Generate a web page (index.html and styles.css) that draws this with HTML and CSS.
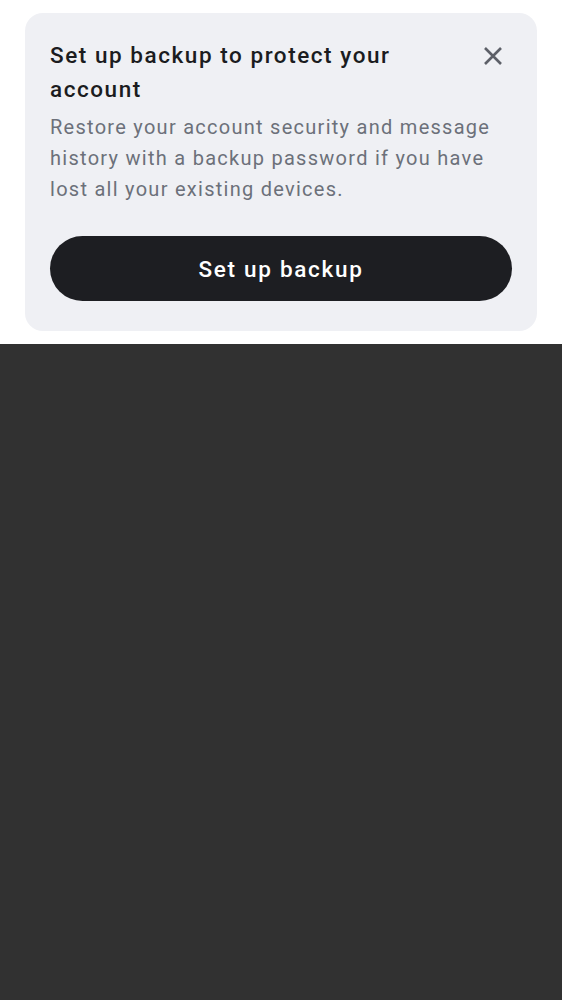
FILE: index.html
```html
<!DOCTYPE html>
<html>
<head>
<meta charset="utf-8">
<link rel="stylesheet" href="styles.css">
</head>
<body>
<div class="top">
  <div class="card">
    <div class="head">
      <h1 class="title">Set up backup to protect your account</h1>
      <button class="close" aria-label="Close">
        <svg width="20" height="20" viewBox="0 0 20 20"><path d="M2 2L18 18M18 2L2 18" stroke="currentColor" stroke-width="2.6" stroke-linecap="butt"/></svg>
      </button>
    </div>
    <p class="body">Restore your account security and message history with a backup password if you have lost all your existing devices.</p>
    <button class="cta">Set up backup</button>
  </div>
</div>
<div class="bottom"></div>
</body>
</html>
```
FILE: styles.css
```css
html, body {
  margin: 0;
  padding: 0;
  height: 100%;
}
body {
  font-family: Roboto, "Liberation Sans", sans-serif;
  background: #313131;
  display: flex;
  flex-direction: column;
}
.top {
  background: #ffffff;
  padding: 13px 25px 13px 25px;
}
.card {
  background: #eff0f4;
  border-radius: 18px;
  padding: 25px 25px 30px 25px;
  display: flex;
  flex-direction: column;
}
.head {
  display: flex;
  align-items: flex-start;
  justify-content: space-between;
}
.title {
  margin: 0;
  font-size: 22.5px;
  font-weight: 500;
  line-height: 34px;
  color: #1b1c20;
  letter-spacing: 1.55px;
  max-width: 400px;
}
.close {
  border: 0;
  background: none;
  padding: 0;
  margin: 8px 9px 0 0;
  color: #5d6068;
  width: 20px;
  height: 20px;
  display: flex;
}
.body {
  margin: 6px 0 0 0;
  font-size: 20px;
  line-height: 31px;
  color: #6c707a;
  letter-spacing: 1.27px;
}
.cta {
  margin-top: 31px;
  height: 65px;
  border: 0;
  border-radius: 33px;
  background: #1d1e22;
  color: #ffffff;
  font-family: Roboto, "Liberation Sans", sans-serif;
  font-size: 22.5px;
  font-weight: 500;
  letter-spacing: 1.7px;
}
.bottom {
  flex: 1;
  background: #313131;
}
```
